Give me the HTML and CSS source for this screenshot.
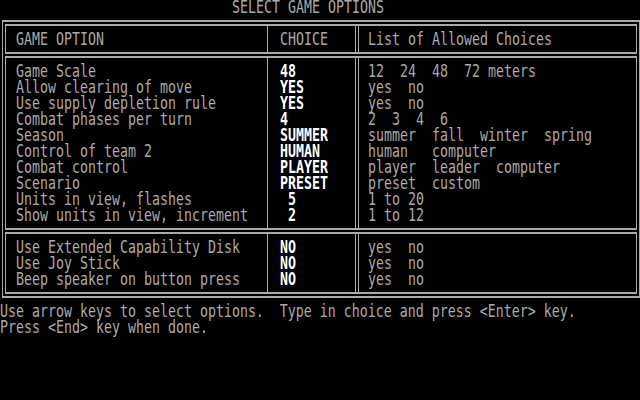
FILE: index.html
```html
<!DOCTYPE html>
<html>
<head>
<meta charset="utf-8">
<title>Select Game Options</title>
<link rel="stylesheet" href="styles.css">
</head>
<body>
<div class="screen">
  <div class="title ln">SELECT GAME OPTIONS</div>
  <div class="frame">
    <div class="box head">
      <div class="cell c1"><div class="ln">GAME OPTION</div></div>
      <div class="cell c2"><div class="ln">CHOICE</div></div>
      <div class="cell c3"><div class="ln">List of Allowed Choices</div></div>
    </div>
    <div class="box body-box">
      <div class="cell c1">
        <div class="ln">Game Scale</div>
        <div class="ln">Allow clearing of move</div>
        <div class="ln">Use supply depletion rule</div>
        <div class="ln">Combat phases per turn</div>
        <div class="ln">Season</div>
        <div class="ln">Control of team 2</div>
        <div class="ln">Combat control</div>
        <div class="ln">Scenario</div>
        <div class="ln">Units in view, flashes</div>
        <div class="ln">Show units in view, increment</div>
      </div>
      <div class="cell c2 val">
        <div class="ln">48</div>
        <div class="ln">YES</div>
        <div class="ln">YES</div>
        <div class="ln">4</div>
        <div class="ln">SUMMER</div>
        <div class="ln">HUMAN</div>
        <div class="ln">PLAYER</div>
        <div class="ln">PRESET</div>
        <div class="ln"> 5</div>
        <div class="ln"> 2</div>
      </div>
      <div class="cell c3">
        <div class="ln">12  24  48  72 meters</div>
        <div class="ln">yes  no</div>
        <div class="ln">yes  no</div>
        <div class="ln">2  3  4  6</div>
        <div class="ln">summer  fall  winter  spring</div>
        <div class="ln">human   computer</div>
        <div class="ln">player  leader  computer</div>
        <div class="ln">preset  custom</div>
        <div class="ln">1 to 20</div>
        <div class="ln">1 to 12</div>
      </div>
    </div>
    <div class="box foot">
      <div class="cell c1">
        <div class="ln">Use Extended Capability Disk</div>
        <div class="ln">Use Joy Stick</div>
        <div class="ln">Beep speaker on button press</div>
      </div>
      <div class="cell c2 val">
        <div class="ln">NO</div>
        <div class="ln">NO</div>
        <div class="ln">NO</div>
      </div>
      <div class="cell c3">
        <div class="ln">yes  no</div>
        <div class="ln">yes  no</div>
        <div class="ln">yes  no</div>
      </div>
    </div>
  </div>
  <div class="help">
    <div class="ln">Use arrow keys to select options.  Type in choice and press &lt;Enter&gt; key.</div>
    <div class="ln">Press &lt;End&gt; key when done.</div>
  </div>
</div>
</body>
</html>
```

FILE: styles.css
```css
html, body {
  margin: 0;
  padding: 0;
  background: #000;
}

body {
  width: 640px;
  height: 400px;
  overflow: hidden;
  font-family: "DejaVu Sans Mono", "Liberation Mono", monospace;
  font-size: 13.29px;
  color: #aaaaaa;
}

.screen {
  width: 640px;
  height: 400px;
}

.ln {
  height: 16px;
  line-height: 16px;
  white-space: pre;
  transform: scaleY(1.34);
}

.title {
  padding-left: 232px;
}

.frame {
  margin-top: 4px;
  margin-left: 2px;
  width: 632px;
  border-top: 2px solid #aaaaaa;
  border-bottom: 2px solid #aaaaaa;
  border-left: 1px solid #aaaaaa;
  border-right: 2px solid #aaaaaa;
  padding: 2px 2px 2px 2px;
  display: flex;
  flex-direction: column;
  gap: 2px;
}

.box {
  display: flex;
  border-top: 2px solid #aaaaaa;
  border-bottom: 2px solid #aaaaaa;
  border-left: 1px solid #aaaaaa;
  border-right: 1px solid #aaaaaa;
}

.cell {
  padding-top: 6px;
  padding-bottom: 4px;
}

.c1 {
  width: 251px;
  padding-left: 10px;
  border-right: 1px solid #aaaaaa;
}

.c2 {
  width: 75px;
  padding-left: 12px;
  border-right: 1px solid #aaaaaa;
}

.c3 {
  flex: 1;
  margin-left: 2px;
  padding-left: 9px;
  border-left: 1px solid #aaaaaa;
}

.val {
  color: #ffffff;
  font-weight: bold;
}

.help {
  margin-top: 6px;
}
```
